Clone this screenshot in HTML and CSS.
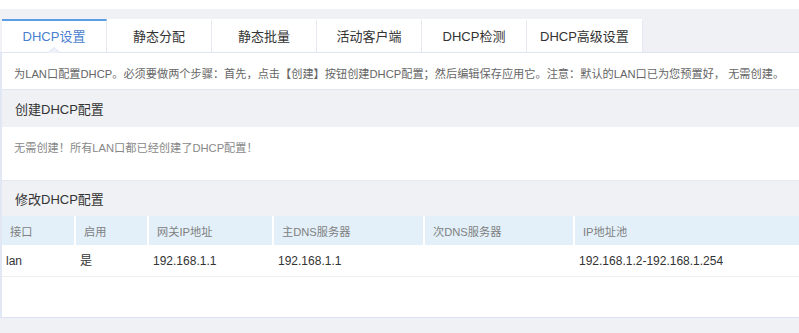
FILE: index.html
```html
<!DOCTYPE html>
<html lang="zh-CN">
<head>
<meta charset="utf-8">
<title>DHCP设置</title>
<link rel="stylesheet" href="styles.css">
</head>
<body>
<div class="topbar"></div>
<div class="wrap">
  <div class="tabs">
    <div class="tab active">DHCP设置<span class="caret"></span></div>
    <div class="tab">静态分配</div>
    <div class="tab">静态批量</div>
    <div class="tab">活动客户端</div>
    <div class="tab">DHCP检测</div>
    <div class="tab">DHCP高级设置</div>
  </div>
  <div class="panel">
    <div class="desc">为LAN口配置DHCP。必须要做两个步骤：首先，点击【创建】按钮创建DHCP配置；然后编辑保存应用它。注意：默认的LAN口已为您预置好， 无需创建。</div>
    <div class="sect-head">创建DHCP配置</div>
    <div class="info">无需创建！所有LAN口都已经创建了DHCP配置！</div>
    <div class="sect-head second">修改DHCP配置</div>
    <div class="grid head">
      <div class="th">接口</div>
      <div class="th">启用</div>
      <div class="th">网关IP地址</div>
      <div class="th">主DNS服务器</div>
      <div class="th">次DNS服务器</div>
      <div class="th last">IP地址池</div>
    </div>
    <div class="grid row">
      <div class="td">lan</div>
      <div class="td">是</div>
      <div class="td">192.168.1.1</div>
      <div class="td">192.168.1.1</div>
      <div class="td"></div>
      <div class="td">192.168.1.2-192.168.1.254</div>
    </div>
    <div class="filler"></div>
  </div>
</div>
</body>
</html>
```
FILE: styles.css
```css
html, body {
  margin: 0;
  padding: 0;
}
body {
  background: #f0f1f5;
  font-family: "Liberation Sans", "Noto Sans CJK SC", sans-serif;
  font-size: 12px;
  color: #333;
  width: 799px;
  height: 333px;
  overflow: hidden;
}
.topbar {
  height: 9px;
  background: #fff;
}
.wrap {
  padding-top: 10px;
}
.tabs {
  display: flex;
  margin-left: 2px;
  height: 33px;
}
.tab {
  position: relative;
  box-sizing: border-box;
  min-width: 105px;
  padding: 0 13px;
  height: 33px;
  line-height: 31px;
  border-top: 2px solid #fff;
  border-right: 1px solid #e6e9f1;
  background: #fff;
  text-align: center;
  font-size: 13px;
  color: #333;
}
.tab.active {
  border-top-color: #5b9ee6;
  color: #4a7fd0;
}
.caret {
  position: absolute;
  left: 45px;
  bottom: -1px;
  width: 0;
  height: 0;
  border-left: 7px solid transparent;
  border-right: 7px solid transparent;
  border-bottom: 6px solid #dfe5f3;
}
.caret::after {
  content: "";
  position: absolute;
  left: -6px;
  top: 1px;
  border-left: 6px solid transparent;
  border-right: 6px solid transparent;
  border-bottom: 5px solid #eef1f8;
}
.panel {
  border-top: 1px solid #dfe5f3;
  border-left: 2px solid #e2e7f4;
  border-bottom: 1px solid #dbe2f5;
  background: #fff;
}
.desc {
  box-sizing: border-box;
  height: 37px;
  padding-top: 5px;
  line-height: 32px;
  padding-left: 12px;
  font-size: 11.2px;
  color: #666;
  white-space: nowrap;
  border-bottom: 1px solid #dfe5f3;
}
.sect-head {
  box-sizing: border-box;
  background: #f0f1f5;
  height: 37px;
  padding-top: 2px;
  line-height: 35px;
  padding-left: 13px;
  font-size: 13px;
  color: #333;
}
.sect-head.second {
  height: 36px;
  padding-top: 2px;
  line-height: 33px;
  border-top: 1px solid #e6e9f1;
}
.info {
  box-sizing: border-box;
  height: 53px;
  padding-top: 2px;
  padding-left: 12px;
  line-height: 38px;
  font-size: 11.2px;
  color: #888;
}
.grid {
  display: grid;
  grid-template-columns: 74px 73px 125px 151px 150px 1fr;
}
.head {
  background: #e3f0fa;
  height: 29px;
}
.th {
  box-sizing: border-box;
  border-right: 2px solid #fff;
  padding-left: 8px;
  padding-top: 2px;
  line-height: 29px;
  font-size: 11.2px;
  color: #808080;
}
.th.last {
  border-right: 0;
}
.row {
  height: 31px;
  border-bottom: 1px solid #eeeeee;
}
.td {
  padding-left: 4px;
  padding-top: 1px;
  line-height: 31px;
  color: #333;
}
.filler {
  height: 40px;
}
```
